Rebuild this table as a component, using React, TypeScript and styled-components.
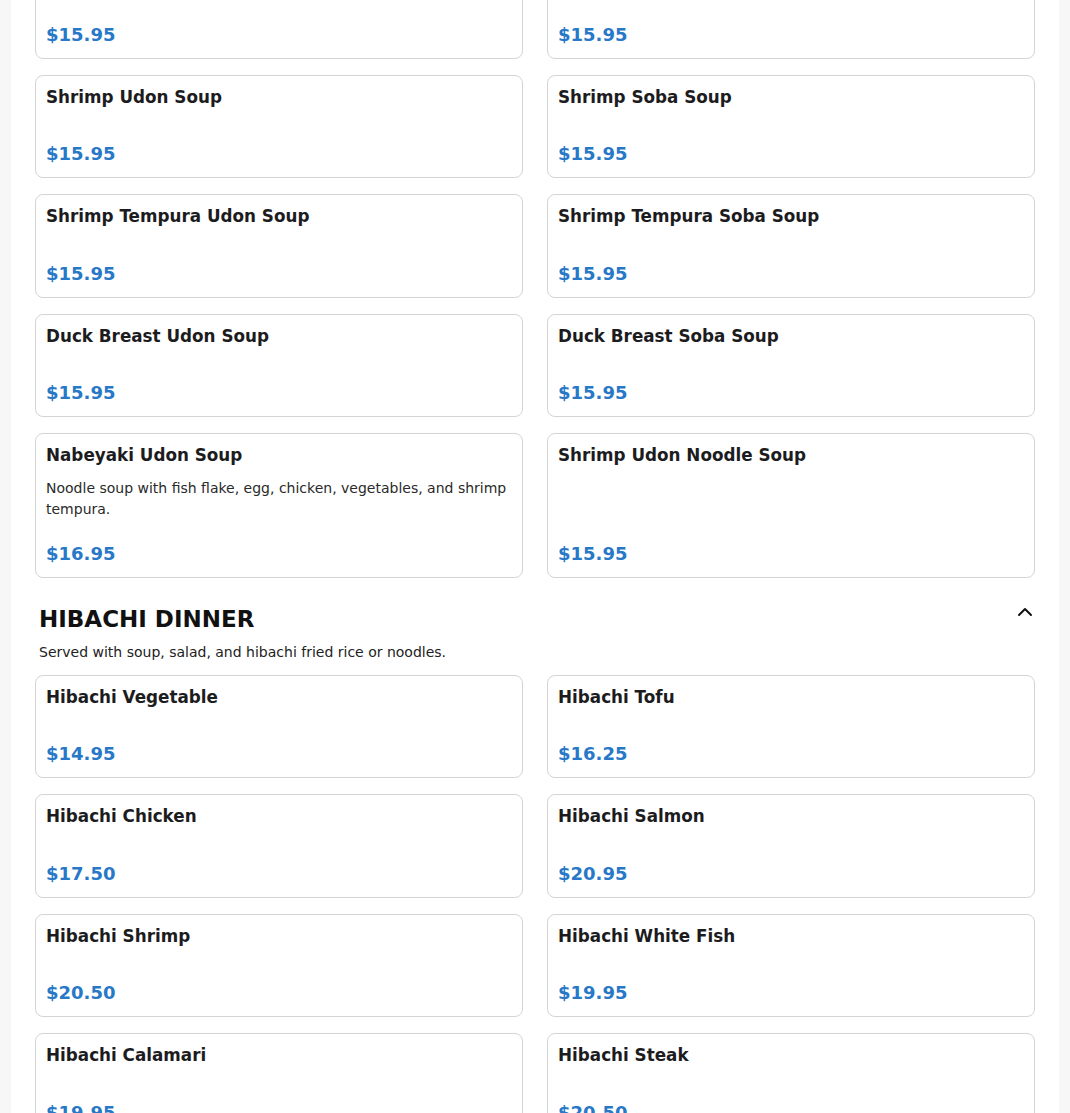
import React from 'react';
import styled, { createGlobalStyle } from 'styled-components';
import { ChevronUp } from 'lucide-react';

const GlobalStyle = createGlobalStyle`
  html, body {
    margin: 0;
    padding: 0;
    background: #f7f7f7;
    font-family: 'DejaVu Sans', 'Liberation Sans', sans-serif;
    color: #1c1c1e;
  }
  * {
    box-sizing: border-box;
  }
`;

const Page = styled.div`
  max-width: 1048px;
  margin: 0 auto;
  background: #ffffff;
  padding: 0 24px 40px;
  overflow: hidden;
`;

// the reference is photographed part-way down the menu
const Scrolled = styled.div`
  margin-top: -45px;
`;

const Section = styled.section`
  & + & {
    margin-top: 27px;
  }
`;

const SectionHeader = styled.div`
  display: flex;
  flex-direction: row;
  align-items: center;
  justify-content: space-between;
  padding: 0 0 0 4px;
`;

const SectionTitle = styled.h2`
  margin: 0;
  font-size: 23px;
  line-height: 28px;
  font-weight: 700;
  color: #111111;
`;

const ToggleButton = styled.button`
  display: flex;
  align-items: center;
  justify-content: center;
  margin: -14px -2px 0 0;
  padding: 0;
  border: none;
  background: transparent;
  color: #111111;
  cursor: pointer;
`;

const SectionNote = styled.p`
  margin: 9px 0 12px;
  padding-left: 4px;
  font-size: 14px;
  line-height: 21px;
  color: #222222;
`;

const Grid = styled.div`
  display: grid;
  grid-template-columns: 1fr 1fr;
  column-gap: 24px;
  row-gap: 16px;
`;

const Card = styled.div`
  display: flex;
  flex-direction: column;
  padding: 10px;
  border: 1px solid #d4d4d4;
  border-radius: 8px;
  background: #ffffff;
`;

const ItemName = styled.h3`
  margin: 0 0 10px;
  font-size: 16.8px;
  line-height: 1.4;
  font-weight: 700;
  color: #1c1c1e;
`;

const ItemDesc = styled.p`
  margin: 0 0 -1px;
  font-size: 14px;
  line-height: 21px;
  color: #2a2a2a;
`;

const Price = styled.div`
  margin-top: auto;
  padding-top: 21px;
  font-size: 18px;
  line-height: 27px;
  font-weight: 700;
  color: #2878c8;
`;

type Item = { name: string; price: string; desc?: string };

const soups: Item[] = [
  { name: 'Chicken Udon Soup', price: '$15.95' },
  { name: 'Chicken Soba Soup', price: '$15.95' },
  { name: 'Shrimp Udon Soup', price: '$15.95' },
  { name: 'Shrimp Soba Soup', price: '$15.95' },
  { name: 'Shrimp Tempura Udon Soup', price: '$15.95' },
  { name: 'Shrimp Tempura Soba Soup', price: '$15.95' },
  { name: 'Duck Breast Udon Soup', price: '$15.95' },
  { name: 'Duck Breast Soba Soup', price: '$15.95' },
  {
    name: 'Nabeyaki Udon Soup',
    price: '$16.95',
    desc: 'Noodle soup with fish flake, egg, chicken, vegetables, and shrimp tempura.',
  },
  { name: 'Shrimp Udon Noodle Soup', price: '$15.95' },
];

const hibachi: Item[] = [
  { name: 'Hibachi Vegetable', price: '$14.95' },
  { name: 'Hibachi Tofu', price: '$16.25' },
  { name: 'Hibachi Chicken', price: '$17.50' },
  { name: 'Hibachi Salmon', price: '$20.95' },
  { name: 'Hibachi Shrimp', price: '$20.50' },
  { name: 'Hibachi White Fish', price: '$19.95' },
  { name: 'Hibachi Calamari', price: '$19.95' },
  { name: 'Hibachi Steak', price: '$20.50' },
];

const MenuCard = ({ item }: { item: Item }) => (
  <Card>
    <ItemName>{item.name}</ItemName>
    {item.desc && <ItemDesc>{item.desc}</ItemDesc>}
    <Price>{item.price}</Price>
  </Card>
);

const App = () => (
  <>
    <GlobalStyle />
    <Page>
      <Scrolled>
        <Section>
          <Grid>
            {soups.map((item) => (
              <MenuCard key={item.name} item={item} />
            ))}
          </Grid>
        </Section>
        <Section>
          <SectionHeader>
            <SectionTitle>HIBACHI DINNER</SectionTitle>
            <ToggleButton aria-label="Collapse section">
              <ChevronUp size={24} strokeWidth={2} />
            </ToggleButton>
          </SectionHeader>
          <SectionNote>
            Served with soup, salad, and hibachi fried rice or noodles.
          </SectionNote>
          <Grid>
            {hibachi.map((item) => (
              <MenuCard key={item.name} item={item} />
            ))}
          </Grid>
        </Section>
      </Scrolled>
    </Page>
  </>
);

export default App;
